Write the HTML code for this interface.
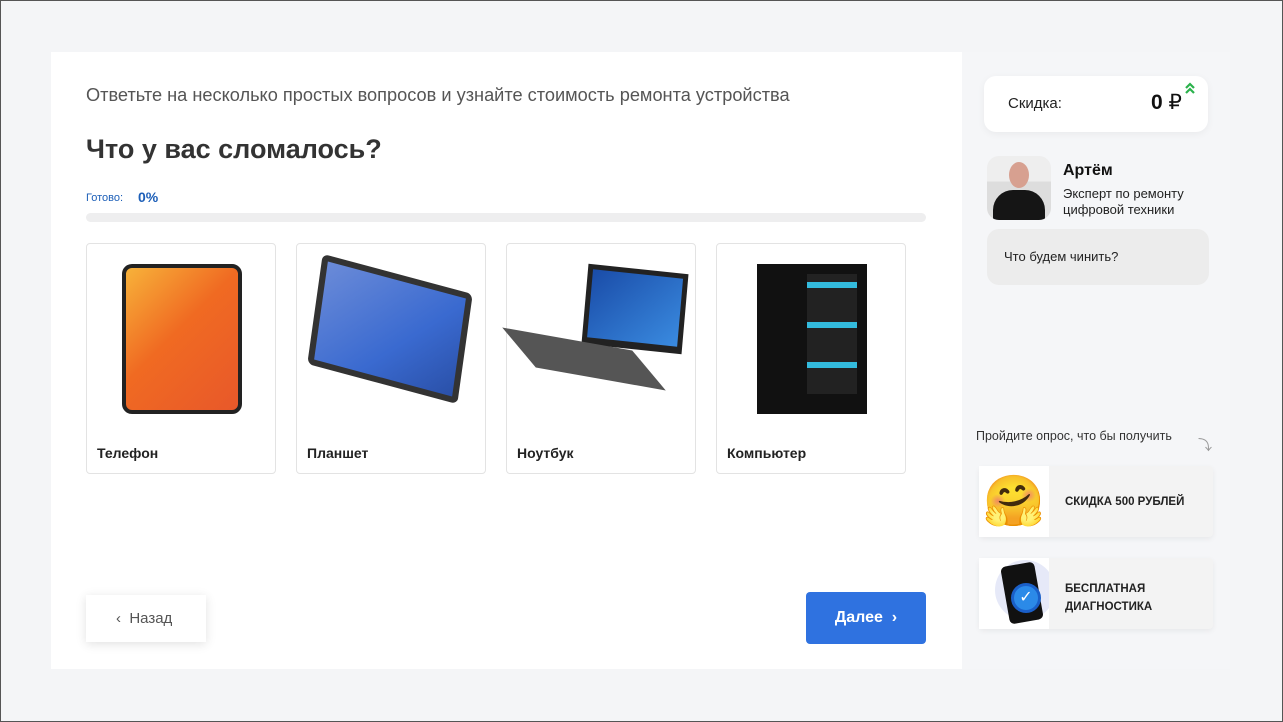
<!DOCTYPE html>
<html><head><meta charset="utf-8"><style>
*{box-sizing:border-box;margin:0;padding:0}
body{width:1283px;height:722px;background:#f4f5f7;font-family:"Liberation Sans",sans-serif;position:relative;overflow:hidden;border:1px solid #555;}
.main{position:absolute;left:50px;top:51px;width:911px;height:617px;background:#fff}
.side{position:absolute;left:961px;top:51px;width:268px;height:617px;background:#f5f6f8}
.abs{position:absolute}
.card{position:absolute;top:191px;width:190px;height:231px;border:1px solid #e3e3e3;border-radius:4px;background:#fff}
.card .lbl{position:absolute;left:10px;top:201px;font-weight:bold;font-size:14px;color:#222}
.card .img{position:absolute}
</style></head><body>
<div class="main">
<div class="abs" style="left:35px;top:33px;font-size:18.2px;color:#555">Ответьте на несколько простых вопросов и узнайте стоимость ремонта устройства</div>
<div class="abs" style="left:35px;top:82px;font-size:27px;font-weight:bold;color:#333">Что у вас сломалось?</div>
<div class="abs" style="left:35px;top:140px;font-size:11px;color:#1d5fb8">Готово:</div>
<div class="abs" style="left:87px;top:137px;font-size:14px;font-weight:bold;color:#1d5fb8">0%</div>
<div class="abs" style="left:35px;top:161px;width:840px;height:9px;background:#eeeeef;border-radius:5px"></div>

<div class="card" style="left:35px">
 <div class="img" style="left:35px;top:20px;width:120px;height:150px;background:linear-gradient(135deg,#f7b23a,#f06a22 45%,#e8582a);border-radius:10px;border:4px solid #222"></div>
 <div class="lbl">Телефон</div></div>
<div class="card" style="left:245px">
 <div class="img" style="left:18px;top:30px;width:150px;height:110px;background:#333;border-radius:6px;transform:skew(-8deg,15deg)"><div style="margin:6px;height:98px;background:linear-gradient(135deg,#6b8bd8,#3a6ad0 60%,#2a50a8)"></div></div>
 <div class="lbl">Планшет</div></div>
<div class="card" style="left:455px">
 <div class="img" style="left:78px;top:25px;width:100px;height:80px;background:#222;transform:skew(-5deg,6deg)"><div style="margin:5px;height:68px;background:linear-gradient(135deg,#1a4ca8,#3a8be0)"></div></div>
 <div class="img" style="left:12px;top:95px;width:130px;height:40px;background:#555;transform:skew(40deg,10deg)"></div>
 <div class="lbl">Ноутбук</div></div>
<div class="card" style="left:665px">
 <div class="img" style="left:40px;top:20px;width:110px;height:150px;background:#111"><div style="margin:10px 10px 0 50px;height:120px;background:repeating-linear-gradient(180deg,#222 0 8px,#3bd 8px 14px,#222 14px 40px)"></div></div>
 <div class="lbl">Компьютер</div></div>

<div class="abs" style="left:35px;top:543px;width:120px;height:47px;background:#fff;box-shadow:0 2px 10px rgba(0,0,0,.12);font-size:15px;color:#555;line-height:47px;padding-left:30px">‹&nbsp; Назад</div>
<div class="abs" style="left:755px;top:540px;width:120px;height:52px;background:#2f72e0;border-radius:4px;color:#fff;font-size:16px;font-weight:bold;line-height:52px;text-align:center">Далее &nbsp;›</div>
</div>

<div class="side">
<div class="abs" style="left:22px;top:24px;width:224px;height:56px;background:#fff;border-radius:12px;box-shadow:0 2px 8px rgba(0,0,0,.05)">
 <div class="abs" style="left:24px;top:19px;font-size:15px;color:#222">Скидка:</div>
 <div class="abs" style="left:167px;top:14px;font-size:21px;font-weight:bold;color:#111">0 <span style="font-weight:normal">₽</span></div>
 <svg class="abs" style="left:200px;top:6px" width="12" height="12" viewBox="0 0 12 12"><path d="M2 6 L6 2 L10 6 M2 11 L6 7 L10 11" fill="none" stroke="#2bb24c" stroke-width="2.2"/></svg>
</div>
<div class="abs" style="left:25px;top:104px;width:64px;height:64px;border-radius:12px;background:linear-gradient(180deg,#eee 0 40%,#ddd 40%);overflow:hidden">
 <div class="abs" style="left:22px;top:6px;width:20px;height:26px;background:#d7a090;border-radius:50%"></div>
 <div class="abs" style="left:6px;top:34px;width:52px;height:40px;background:#151515;border-radius:20px 20px 0 0"></div>
</div>
<div class="abs" style="left:101px;top:110px;font-size:16px;font-weight:bold;color:#111">Артём</div>
<div class="abs" style="left:101px;top:134px;font-size:13px;color:#222;line-height:16px">Эксперт по ремонту<br>цифровой техники</div>
<div class="abs" style="left:25px;top:177px;width:222px;height:56px;background:#ececec;border-radius:12px;font-size:13px;color:#222;line-height:56px;padding-left:17px">Что будем чинить?</div>
<div class="abs" style="left:14px;top:377px;font-size:12.5px;color:#333">Пройдите опрос, что бы получить</div>
<div class="abs" style="left:236px;top:383px;font-size:14px;color:#999">⤵</div>
<div class="abs" style="left:17px;top:414px;width:234px;height:71px;background:#f3f3f3;box-shadow:0 2px 6px rgba(0,0,0,.06);border-radius:4px">
 <div class="abs" style="left:0;top:0;width:70px;height:71px;background:#fff;font-size:50px;text-align:center;line-height:71px">🤗</div>
 <div class="abs" style="left:86px;top:30px;font-size:11.5px;font-weight:bold;color:#222">СКИДКА 500 РУБЛЕЙ</div>
</div>
<div class="abs" style="left:17px;top:506px;width:234px;height:71px;background:#f3f3f3;box-shadow:0 2px 6px rgba(0,0,0,.06);border-radius:4px">
 <div class="abs" style="left:0;top:0;width:70px;height:71px;background:#fff;overflow:hidden">
  <div class="abs" style="left:16px;top:2px;width:60px;height:60px;border-radius:50%;background:#e6e9f8"></div>
  <div class="abs" style="left:26px;top:6px;width:34px;height:58px;background:#111;border-radius:5px;transform:rotate(-10deg)"></div>
  <div class="abs" style="left:32px;top:25px;width:30px;height:30px;border-radius:50%;background:#2b8ae8;border:3px solid #1a5fc8;color:#fff;text-align:center;line-height:24px;font-size:16px">✓</div>
 </div>
 <div class="abs" style="left:86px;top:22px;font-size:11.5px;font-weight:bold;color:#222;line-height:18px">БЕСПЛАТНАЯ<br>ДИАГНОСТИКА</div>
</div>
</div>
</body></html>
